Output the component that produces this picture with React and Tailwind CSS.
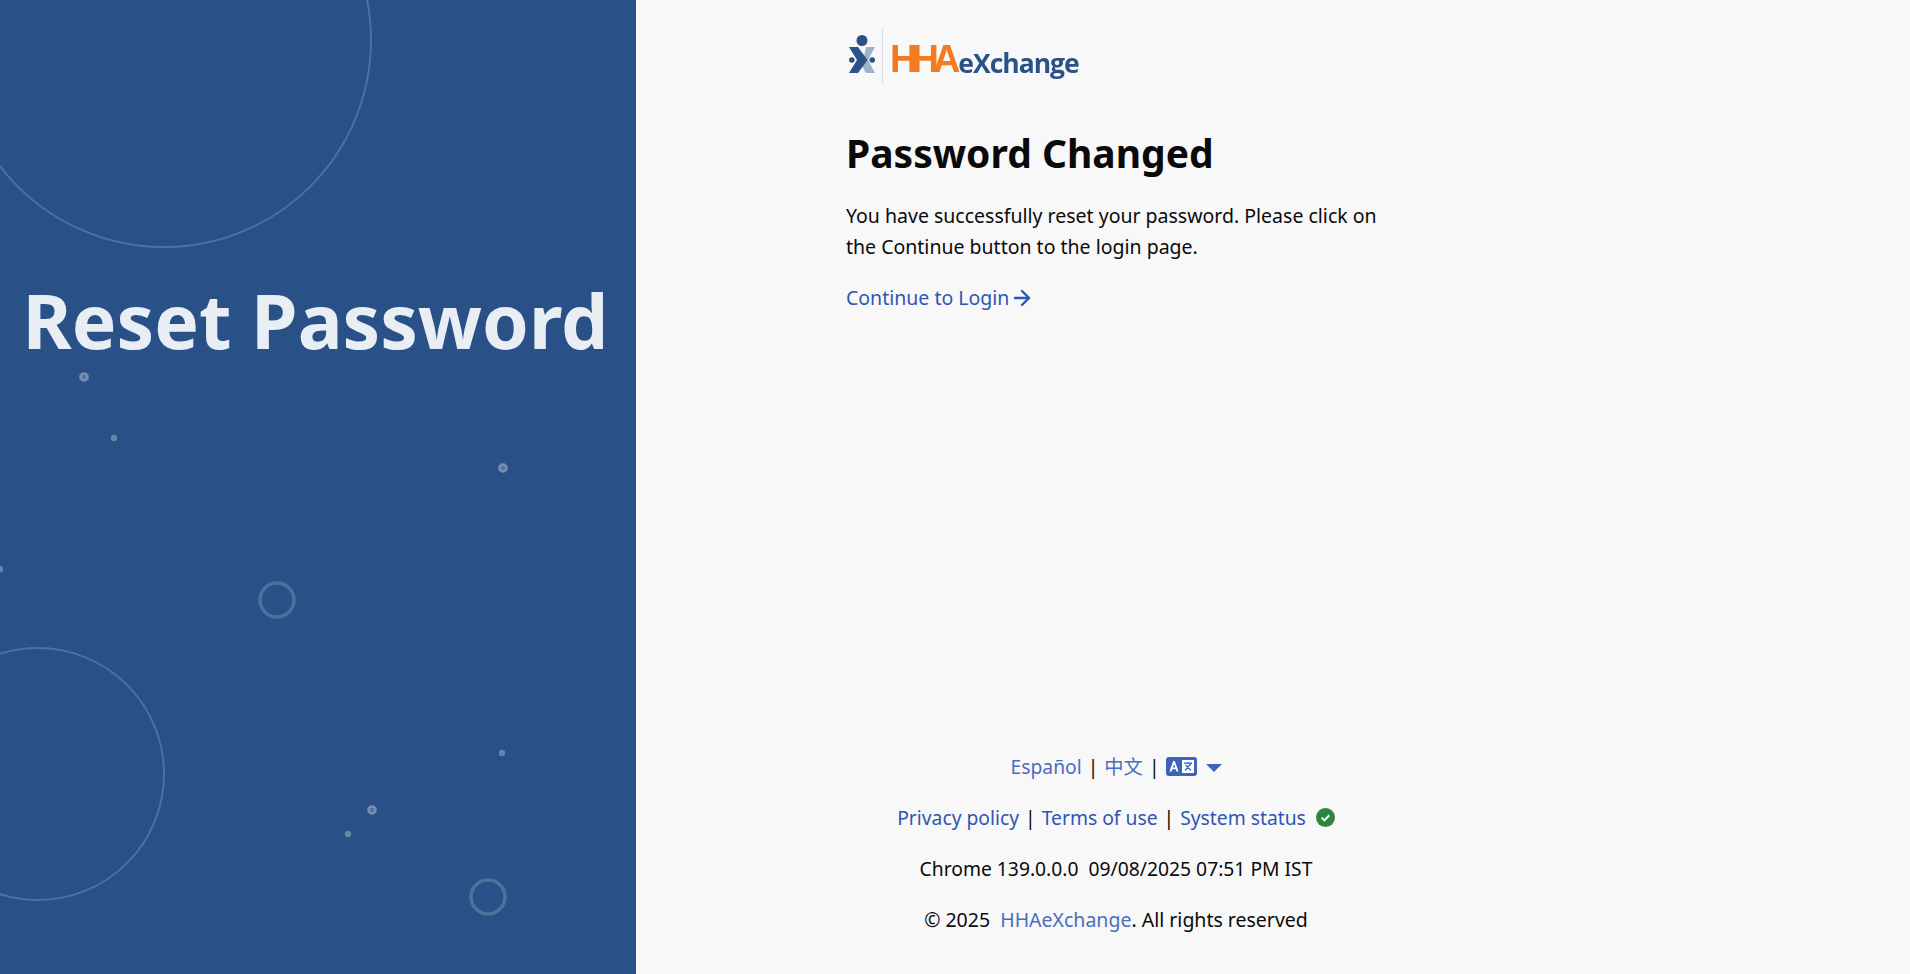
import { ArrowRight } from 'lucide-react';

function PanelDecor() {
  const rings = [[84, 377], [503, 468], [372, 810]];
  const specks = [[114, 438], [0, 569], [502, 753], [348, 834]];
  return (
    <svg className="absolute inset-0 w-full h-full" viewBox="0 0 636 974" fill="none">
      <circle cx="164" cy="40" r="207" stroke="#fff" strokeOpacity=".18" strokeWidth="2" />
      <circle cx="38" cy="774" r="126" stroke="#fff" strokeOpacity=".18" strokeWidth="2" />
      <circle cx="277" cy="600" r="17" stroke="#fff" strokeOpacity=".18" strokeWidth="3.5" />
      <circle cx="488" cy="897" r="17" stroke="#fff" strokeOpacity=".18" strokeWidth="3.5" />
      {rings.map(([x, y], i) => (
        <circle key={i} cx={x} cy={y} r="3.7" stroke="#fff" strokeOpacity=".27" strokeWidth="2.6" fill="#fff" fillOpacity=".2" />
      ))}
      {specks.map(([x, y], i) => (
        <circle key={i} cx={x} cy={y} r="3.2" fill="#fff" fillOpacity=".3" />
      ))}
    </svg>
  );
}

function Logo() {
  return (
    <div className="flex items-end h-[56px] blur-[0.4px]">
      <svg width="26" height="38" viewBox="0 0 26 38" className="shrink-0 self-start mt-[7px] ml-[3px]">
        <circle cx="13" cy="5.5" r="5.5" fill="#2a5288" />
        <path d="M17 12h9l-7 13 7 13h-9l-4-7z" fill="#9fb2cc" />
        <path d="M0 12h9l9.5 13L9 38H0l8-13z" fill="#2a5288" />
        <circle cx="2.8" cy="25" r="2.8" fill="#2a5288" />
        <circle cx="23.2" cy="25" r="2.8" fill="#2a5288" />
      </svg>
      <div className="w-px h-[56px] bg-[#d5dde6] self-center ml-[7px] mr-[7px]" />
      <span className="font-['Liberation_Sans',sans-serif] font-bold text-[#f47b20] text-[38px] tracking-[-6px] leading-none mb-[6px]">HHA</span>
      <span className="font-['Open_Sans',sans-serif] font-bold text-[#2a5288] text-[26.5px] tracking-[-1px] leading-none mb-[8px] ml-[4px]">eXchange</span>
    </div>
  );
}

function TranslateIcon() {
  return (
    <svg width="31" height="19" viewBox="0 0 31 19">
      <rect width="31" height="19" rx="3" fill="#3f63bb" />
      <path d="M3.5 14.5 7.2 4h1.6l3.7 10.500h-2l-.7-2.300H6.200l-.7 2.300zm3.300-4h2.400L8 7z" fill="#fff" />
      <rect x="16" y="3" width="12" height="13" fill="#fff" />
      <path d="M18 6.200h8M22 5v1.500M25 6.500 19 13.500M19.500 8l5.500 5.500" stroke="#3f63bb" strokeWidth="1.300" fill="none" />
    </svg>
  );
}

export default function App() {
  return (
    <div className="flex h-screen overflow-hidden bg-[#f8f8f8] font-['Noto_Sans','Noto_Sans_CJK_SC',sans-serif] text-[19.5px] text-[#0a0a0a]">
      {/* Blue side panel */}
      <div className="relative w-[636px] shrink-0 bg-[#295087] overflow-hidden">
        <PanelDecor />
        <h1 className="relative text-center text-[75px] leading-none font-bold text-[#e9edf4] pt-[283px] pr-[5px]">Reset Password</h1>
      </div>

      {/* Main column */}
      <div className="flex flex-col justify-between w-[540px] ml-[210px] pt-[28px] pb-[39px]">
        <div>
          <Logo />
          <h2 className="text-[39px] leading-[52px] font-bold mt-[43px]">Password Changed</h2>
          <p className="leading-[31px] mt-[21px] w-[560px]">You have successfully reset your password. Please click on<br />the Continue button to the login page.</p>
          <a className="flex items-center text-[#2f55b5] mt-[20px] leading-[31px]">
            Continue to Login
            <ArrowRight size={24} strokeWidth={2.4} className="ml-[1px]" />
          </a>
        </div>

        <div className="flex flex-col items-center gap-[20px] leading-[31px] text-[19.3px]">
          <div className="flex items-center gap-[6px]">
            <span className="text-[#4a6cc0]">Español</span>
            <span>|</span>
            <span className="text-[#4a6cc0]">中文</span>
            <span>|</span>
            <TranslateIcon />
            <span className="w-0 h-0 ml-[3px] mt-[3px] border-x-[8.5px] border-x-transparent border-t-[8px] border-t-[#3f63bb]" />
          </div>
          <div className="flex items-center gap-[6px]">
            <span className="text-[#2f55b5]">Privacy policy</span>
            <span>|</span>
            <span className="text-[#2f55b5]">Terms of use</span>
            <span>|</span>
            <span className="text-[#2f55b5]">System status</span>
            <svg width="19" height="19" viewBox="0 0 20 20" className="ml-[4px]">
              <circle cx="10" cy="10" r="10" fill="#2e8540" />
              <path d="m6 10.2 2.8 2.8L14 7.6" stroke="#fff" strokeWidth="2" fill="none" />
            </svg>
          </div>
          <div className="whitespace-pre">Chrome 139.0.0.0  09/08/2025 07:51 PM IST</div>
          <div className="whitespace-pre text-[19.5px]">© 2025  <span className="text-[#4a6cc0]">HHAeXchange</span>. All rights reserved</div>
        </div>
      </div>
    </div>
  );
}
